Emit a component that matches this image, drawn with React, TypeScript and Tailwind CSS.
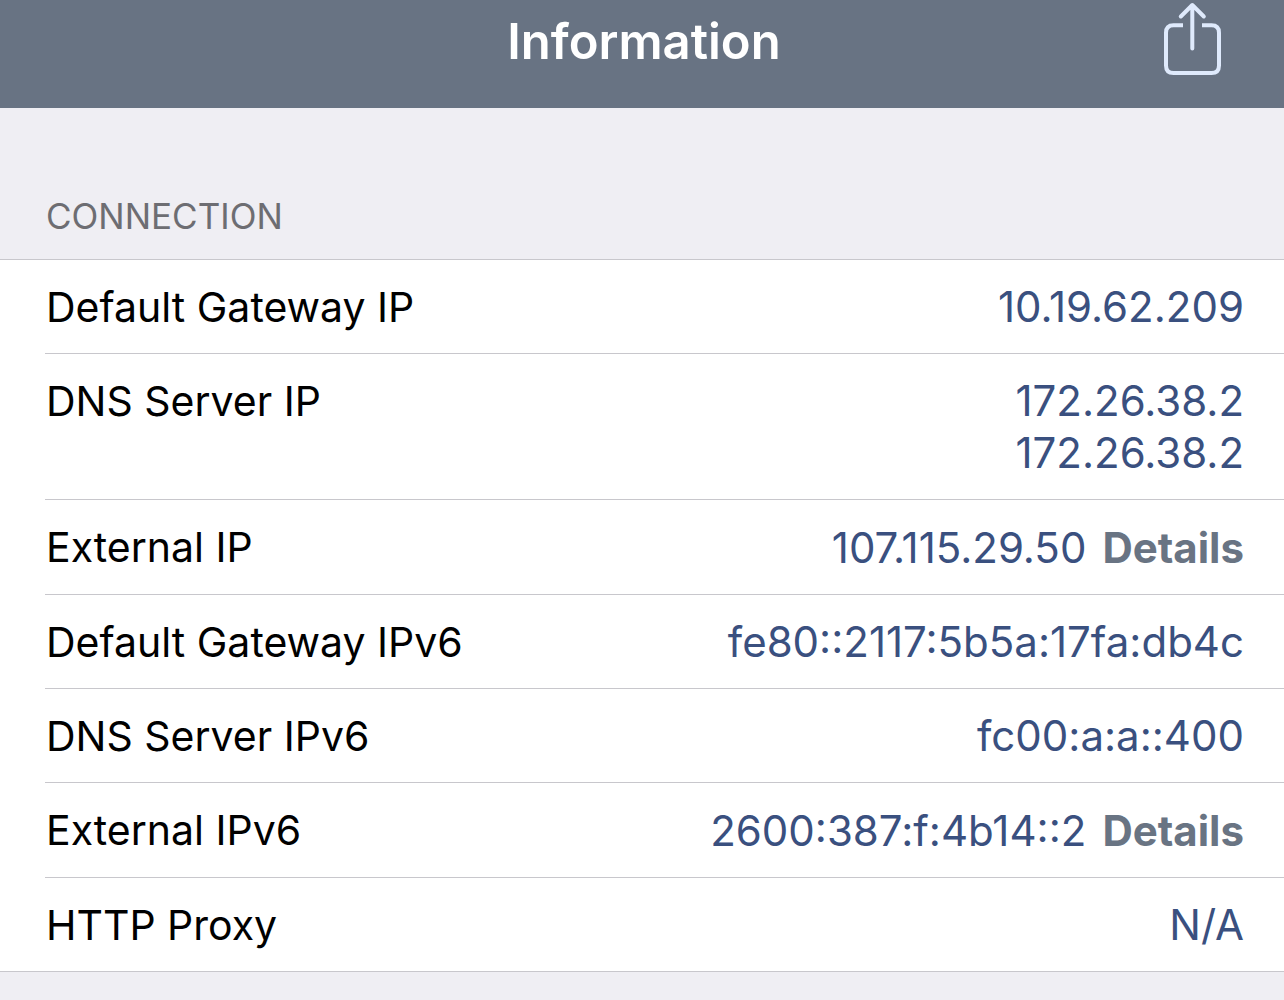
import React from 'react';

interface InfoRow {
  label: string;
  values: string[];
  details?: boolean;
}

const rows: InfoRow[] = [
  { label: 'Default Gateway IP', values: ['10.19.62.209'] },
  { label: 'DNS Server IP', values: ['172.26.38.2', '172.26.38.2'] },
  { label: 'External IP', values: ['107.115.29.50'], details: true },
  { label: 'Default Gateway IPv6', values: ['fe80::2117:5b5a:17fa:db4c'] },
  { label: 'DNS Server IPv6', values: ['fc00:a:a::400'] },
  { label: 'External IPv6', values: ['2600:387:f:4b14::2'], details: true },
  { label: 'HTTP Proxy', values: ['N/A'] },
];

function ShareIcon() {
  return (
    <svg
      className="w-[60px] h-[76px]"
      viewBox="0 0 60 76"
      fill="none"
      stroke="currentColor"
      strokeWidth="4"
      strokeLinejoin="round"
    >
      <path d="M21 25.300H11.500Q4 25.300 4 32.800V65.500Q4 73 11.500 73H49.500Q57 73 57 65.500V32.800Q57 25.300 49.500 25.300H40" />
      <path strokeLinecap="round" d="M30.300 48.500V6M18.800 16.500L30.300 5L41.800 16.500" />
    </svg>
  );
}

function Row({ row }: { row: InfoRow }) {
  return (
    <div className="ml-[45px] flex items-start justify-between border-b border-[#c8c7cc] pl-px pr-10 pt-[21px] pb-5 leading-[52px] last:border-b-0">
      <dt className="text-[41px] text-black">{row.label}</dt>
      <dd className="flex items-baseline gap-4 text-right text-[42px] text-[#3a507f]">
        <div>
          {row.values.map((value, index) => (
            <div key={index}>{value}</div>
          ))}
        </div>
        {row.details && (
          <button type="button" className="font-bold leading-[53px] text-[#697483]">
            Details
          </button>
        )}
      </dd>
    </div>
  );
}

export default function App() {
  return (
    <div className="min-h-screen bg-[#efeef3] font-['Inter',sans-serif]">
      <header className="grid h-[108px] grid-cols-[1fr_auto_1fr] items-start bg-[#687383] pl-[66px] pr-[62px]">
        <h1 className="col-start-2 pt-4 text-[49px] font-semibold leading-[52px] text-white">Information</h1>
        <button type="button" aria-label="Share" className="justify-self-end text-[#dfeafc]">
          <ShareIcon />
        </button>
      </header>
      <section>
        <h2 className="px-[46px] pt-[86px] pb-5 text-[35px] leading-[45px] text-[#6d6d72]">CONNECTION</h2>
        <dl className="border-y border-[#c8c7cc] bg-white">
          {rows.map((row) => (
            <Row key={row.label} row={row} />
          ))}
        </dl>
      </section>
    </div>
  );
}
